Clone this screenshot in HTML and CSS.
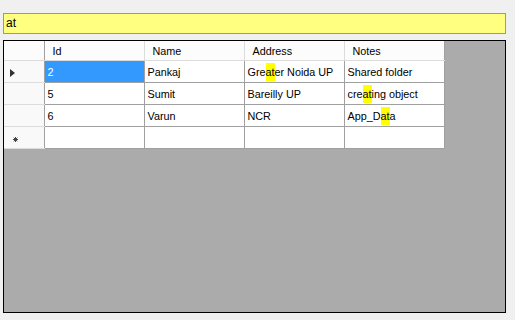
FILE: index.html
```html
<!DOCTYPE html>
<html lang="en">
<head>
  <meta charset="UTF-8" />
  <title>Search Grid</title>
  <link rel="stylesheet" href="styles.css">
</head>
<body>

  <div class="search-box">at</div>

  <div class="grid">
    <table>
      <colgroup>
        <col class="col-rowhead">
        <col class="col-data">
        <col class="col-data">
        <col class="col-data">
        <col class="col-data">
      </colgroup>
      <tr class="head">
        <th class="rowhead"></th>
        <th>Id</th>
        <th>Name</th>
        <th>Address</th>
        <th>Notes</th>
      </tr>
      <tr>
        <td class="rowhead"><span class="arrow"></span></td>
        <td class="selected">2</td>
        <td>Pankaj</td>
        <td>Gre<span class="hl">at</span>er Noida UP</td>
        <td>Shared folder</td>
      </tr>
      <tr>
        <td class="rowhead"></td>
        <td>5</td>
        <td>Sumit</td>
        <td>Bareilly UP</td>
        <td>cre<span class="hl">at</span>ing object</td>
      </tr>
      <tr>
        <td class="rowhead"></td>
        <td>6</td>
        <td>Varun</td>
        <td>NCR</td>
        <td>App_D<span class="hl">at</span>a</td>
      </tr>
      <tr>
        <td class="rowhead">
          <svg class="star" width="5" height="5" viewBox="0 0 5 5">
            <path d="M2.5 0V5M0 2.5H5M0.7 0.7L4.3 4.3M4.3 0.7L0.7 4.3" stroke="#444" stroke-width="1"/>
          </svg>
        </td>
        <td></td>
        <td></td>
        <td></td>
        <td></td>
      </tr>
    </table>
  </div>

</body>
</html>
```

FILE: styles.css
```css
body {
  margin: 0;
  background: #f0f0f0;
  font-family: "Liberation Sans", Arial, sans-serif;
  font-size: 10.8px;
  color: #000;
  width: 515px;
  height: 320px;
  overflow: hidden;
}
.search-box {
  margin: 13px 0 0 3px;
  width: 499px;
  height: 19px;
  line-height: 19px;
  padding-left: 2px;
  border: 1px solid #7a9cd3;
  background: #ffff80;
  font-size: 12px;
}
.grid {
  margin: 6px 0 0 3px;
  width: 501px;
  height: 271px;
  border: 1px solid #000;
  background: #ababab;
  overflow: hidden;
}
table {
  border-collapse: collapse;
  table-layout: fixed;
  width: 440px;
}
.col-rowhead { width: 40px; }
.col-data { width: 100px; }
th, td {
  padding: 0 0 0 3px;
  border-right: 1px solid #a0a0a0;
  border-bottom: 1px solid #a0a0a0;
  background: #fff;
  text-align: left;
  font-weight: normal;
  white-space: nowrap;
  overflow: hidden;
}
td {
  height: 21px;
}
.head th {
  height: 19px;
  padding-left: 8px;
  background: #fcfcfc;
  border-right: 1px solid #dcdcdc;
  border-bottom: 1px solid #dcdcdc;
}
.head th:last-child {
  border-right: 1px solid #a0a0a0;
}
.rowhead {
  background: #f9f9f9;
  border-right: 1px solid #a0a0a0;
  border-bottom: 1px solid #dcdcdc;
  padding-left: 6px;
}
.head .rowhead {
  border-right: 1px solid #a0a0a0;
}
.selected {
  background: #3399ff;
  color: #fff;
}
.hl {
  background: #ffff00;
  display: inline-block;
  line-height: 18px;
}
.arrow {
  display: inline-block;
  width: 0;
  height: 0;
  border-top: 4px solid transparent;
  border-bottom: 4px solid transparent;
  border-left: 5px solid #333;
  vertical-align: middle;
}
.star {
  display: block;
  margin: 3px 0 0 3px;
}
```
